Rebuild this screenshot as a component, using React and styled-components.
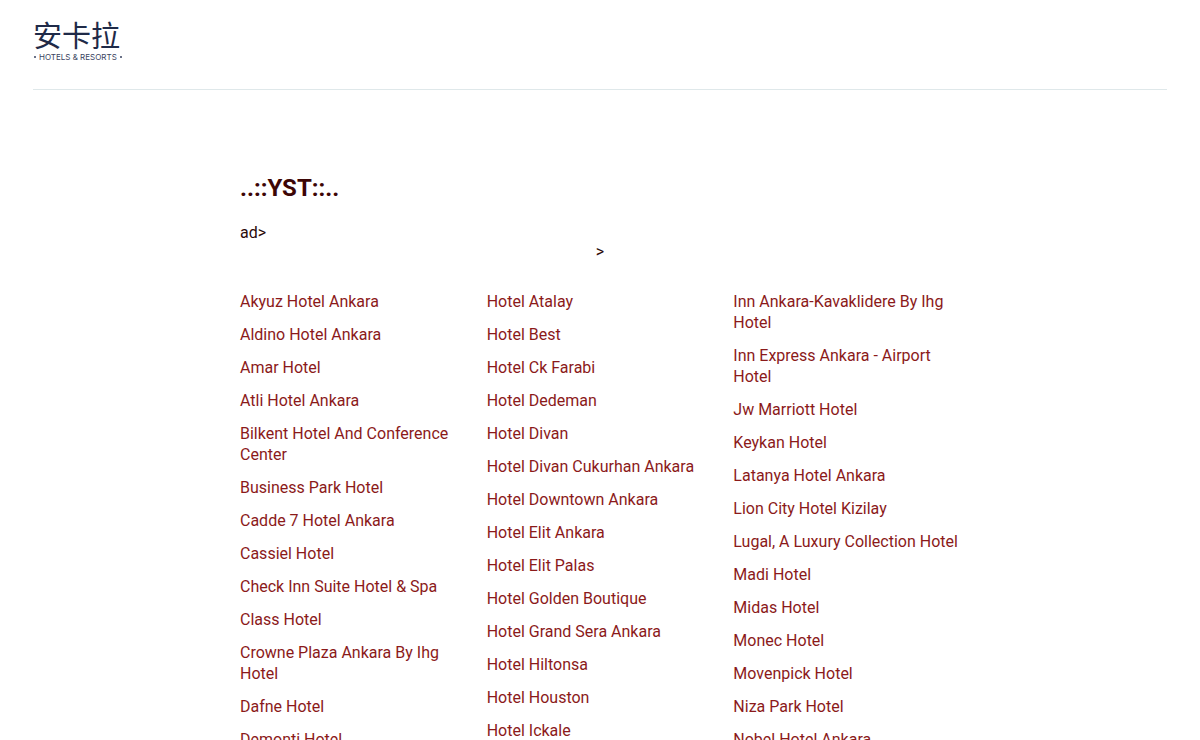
import React from 'react';
import styled, { createGlobalStyle } from 'styled-components';

const colors = {
  heading: '#3d0606',
  link: '#8b1a1a',
  logo: '#1f2a48',
  rule: '#dfe8ea',
  tagline: '#3a4360',
  text: '#2b0a0a',
};

const GlobalStyle = createGlobalStyle`
  *,
  *::before,
  *::after {
    box-sizing: border-box;
  }

  body {
    background: #fff;
    color: ${colors.text};
    font-family: Roboto, 'Liberation Sans', sans-serif;
    font-size: 16px;
    line-height: 21px;
    margin: 0;
  }
`;

const Header = styled.header`
  border-bottom: 1px solid ${colors.rule};
  margin: 0 33px;
  padding: 18px 0 27px;
`;

const Logo = styled.a`
  color: ${colors.logo};
  display: inline-flex;
  flex-direction: column;
  gap: 2px;
  text-decoration: none;
  vertical-align: top;
`;

const LogoName = styled.span`
  font-family: 'Noto Sans CJK SC', sans-serif;
  font-size: 29px;
  line-height: 32px;
`;

const LogoTagline = styled.span`
  align-items: center;
  color: ${colors.tagline};
  display: flex;
  font-family: Inter, sans-serif;
  font-size: 8px;
  gap: 3px;
  line-height: 10px;
  padding: 0 1px;
  white-space: nowrap;

  &::before,
  &::after {
    background: currentColor;
    border-radius: 1px;
    content: '';
    height: 2px;
    width: 2px;
  }
`;

const Main = styled.main`
  margin: 0 auto;
  max-width: 720px;
  padding: 84px 0 40px;
`;

const Title = styled.h1`
  color: ${colors.heading};
  font-size: 24px;
  font-weight: 700;
  line-height: 28px;
  margin: 0 0 21px;
`;

const Note = styled.div`
  line-height: 19px;
  text-align: ${props => props.$align || 'left'};
`;

const Directory = styled.nav`
  display: grid;
  gap: 20px;
  grid-template-columns: repeat(3, minmax(0, 1fr));
  margin-top: 30px;
`;

const HotelList = styled.ul`
  list-style: none;
  margin: 0;
  padding: 0;
`;

const HotelItem = styled.li`
  margin-bottom: 12px;
`;

const HotelLink = styled.a`
  color: ${colors.link};
  text-decoration: none;

  &:hover {
    text-decoration: underline;
  }
`;

const hotelColumns = [
  [
    'Akyuz Hotel Ankara',
    'Aldino Hotel Ankara',
    'Amar Hotel',
    'Atli Hotel Ankara',
    'Bilkent Hotel And Conference Center',
    'Business Park Hotel',
    'Cadde 7 Hotel Ankara',
    'Cassiel Hotel',
    'Check Inn Suite Hotel & Spa',
    'Class Hotel',
    'Crowne Plaza Ankara By Ihg Hotel',
    'Dafne Hotel',
    'Demonti Hotel',
  ],
  [
    'Hotel Atalay',
    'Hotel Best',
    'Hotel Ck Farabi',
    'Hotel Dedeman',
    'Hotel Divan',
    'Hotel Divan Cukurhan Ankara',
    'Hotel Downtown Ankara',
    'Hotel Elit Ankara',
    'Hotel Elit Palas',
    'Hotel Golden Boutique',
    'Hotel Grand Sera Ankara',
    'Hotel Hiltonsa',
    'Hotel Houston',
    'Hotel Ickale',
  ],
  [
    'Inn Ankara-Kavaklidere By Ihg Hotel',
    'Inn Express Ankara - Airport Hotel',
    'Jw Marriott Hotel',
    'Keykan Hotel',
    'Latanya Hotel Ankara',
    'Lion City Hotel Kizilay',
    'Lugal, A Luxury Collection Hotel',
    'Madi Hotel',
    'Midas Hotel',
    'Monec Hotel',
    'Movenpick Hotel',
    'Niza Park Hotel',
    'Nobel Hotel Ankara',
  ],
];

function HotelColumn({ hotels }) {
  return (
    <HotelList>
      {hotels.map(hotel => (
        <HotelItem key={hotel}>
          <HotelLink href="#">{hotel}</HotelLink>
        </HotelItem>
      ))}
    </HotelList>
  );
}

export default function App() {
  return (
    <>
      <GlobalStyle />
      <Header>
        <Logo href="#">
          <LogoName lang="zh-CN">安卡拉</LogoName>
          <LogoTagline>HOTELS &amp; RESORTS</LogoTagline>
        </Logo>
      </Header>
      <Main>
        <Title>..::YST::..</Title>
        <Note>ad&gt;</Note>
        <Note $align="center">&gt;</Note>
        <Directory>
          {hotelColumns.map(hotels => (
            <HotelColumn key={hotels[0]} hotels={hotels} />
          ))}
        </Directory>
      </Main>
    </>
  );
}
